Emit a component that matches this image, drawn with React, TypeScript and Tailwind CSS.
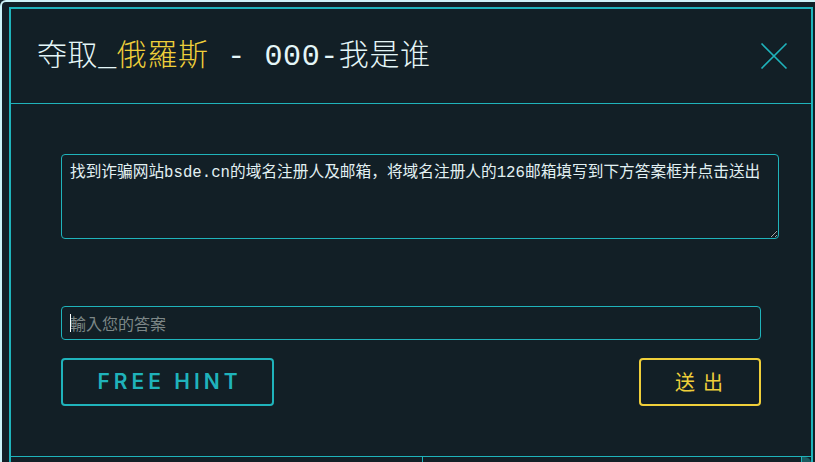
const mono = "font-['Liberation_Mono','Noto_Sans_CJK_SC',monospace]"

function CloseIcon() {
  return (
    <svg width="28" height="28" viewBox="0 0 28 28" className="text-[#1fb3bb]">
      <path d="M1.5 1.5 L26.5 26.5 M26.5 1.5 L1.5 26.5" stroke="currentColor" strokeWidth="1.6" fill="none" />
    </svg>
  )
}

export default function App() {
  return (
    <div className="w-[815px] h-[462px] overflow-hidden bg-[#121f26]">
      <div className="h-full border-l-2 border-t-2 border-[#cdf2f7] rounded-tl-[6px] pl-[7px] pt-[5px]">
        <div className="w-[804px] h-[470px] border-2 border-[#1fb3bb] bg-[#121f26]">
          <div className="flex items-center justify-between h-[95px] border-b border-[#1fb3bb] pl-[26px] pr-[23px]">
            <h1 className={`${mono} text-[30px] font-light leading-none tracking-[0.6px] text-[#e4f6f8] pt-[2px]`}>
              夺取_<span className="text-[#efcf3a]">俄羅斯</span> - 000-我是谁
            </h1>
            <CloseIcon />
          </div>

          <div className="px-[50px] pt-[50px] pb-[50px]">
            <textarea
              readOnly
              value="找到诈骗网站bsde.cn的域名注册人及邮箱，将域名注册人的126邮箱填写到下方答案框并点击送出"
              className={`${mono} block w-[718px] h-[85px] bg-transparent border border-[#1fb3bb] rounded-[4px] pl-2 pr-1 pt-[6px] text-[15.7px] leading-6 text-[#e2f1f3] outline-none`}
            />

            <div className="relative mt-[67px] w-[700px]">
              <input
                placeholder="輸入您的答案"
                className="block w-full h-[34px] bg-transparent border border-[#1fb3bb] rounded-[4px] px-2 text-[16px] font-['Noto_Sans_CJK_TC',sans-serif] text-[#e2f1f3] placeholder:text-[#7d8787] outline-none"
              />
              <span className="absolute left-[9px] top-[8px] w-px h-[18px] bg-white" />
            </div>

            <div className="flex justify-between mt-[18px] w-[700px]">
              <button className="w-[213px] h-[48px] border-2 border-[#1fb3bb] rounded-[4px] text-[#1fb3bb] text-[21px] font-semibold tracking-[4px] font-['Inter',sans-serif] pl-[4px]">
                FREE HINT
              </button>
              <button className="w-[122px] h-[48px] border-2 border-[#efcf3a] rounded-[4px] text-[#efcf3a] text-[20px] tracking-[8px] font-['Noto_Sans_CJK_SC',sans-serif] pl-[6px]">
                送出
              </button>
            </div>
          </div>

          <div className="flex h-[40px] border-t border-[#1fb3bb]">
            <div className="w-[412px] border-r border-[#1fb3bb]" />
            <div className="flex-1 flex justify-end">
              <div className="w-[10px] h-[10px] border-l border-[#1fb3bb] bg-[#1b5a5f] rounded-tr-[6px]" />
            </div>
          </div>
        </div>
      </div>
    </div>
  )
}
